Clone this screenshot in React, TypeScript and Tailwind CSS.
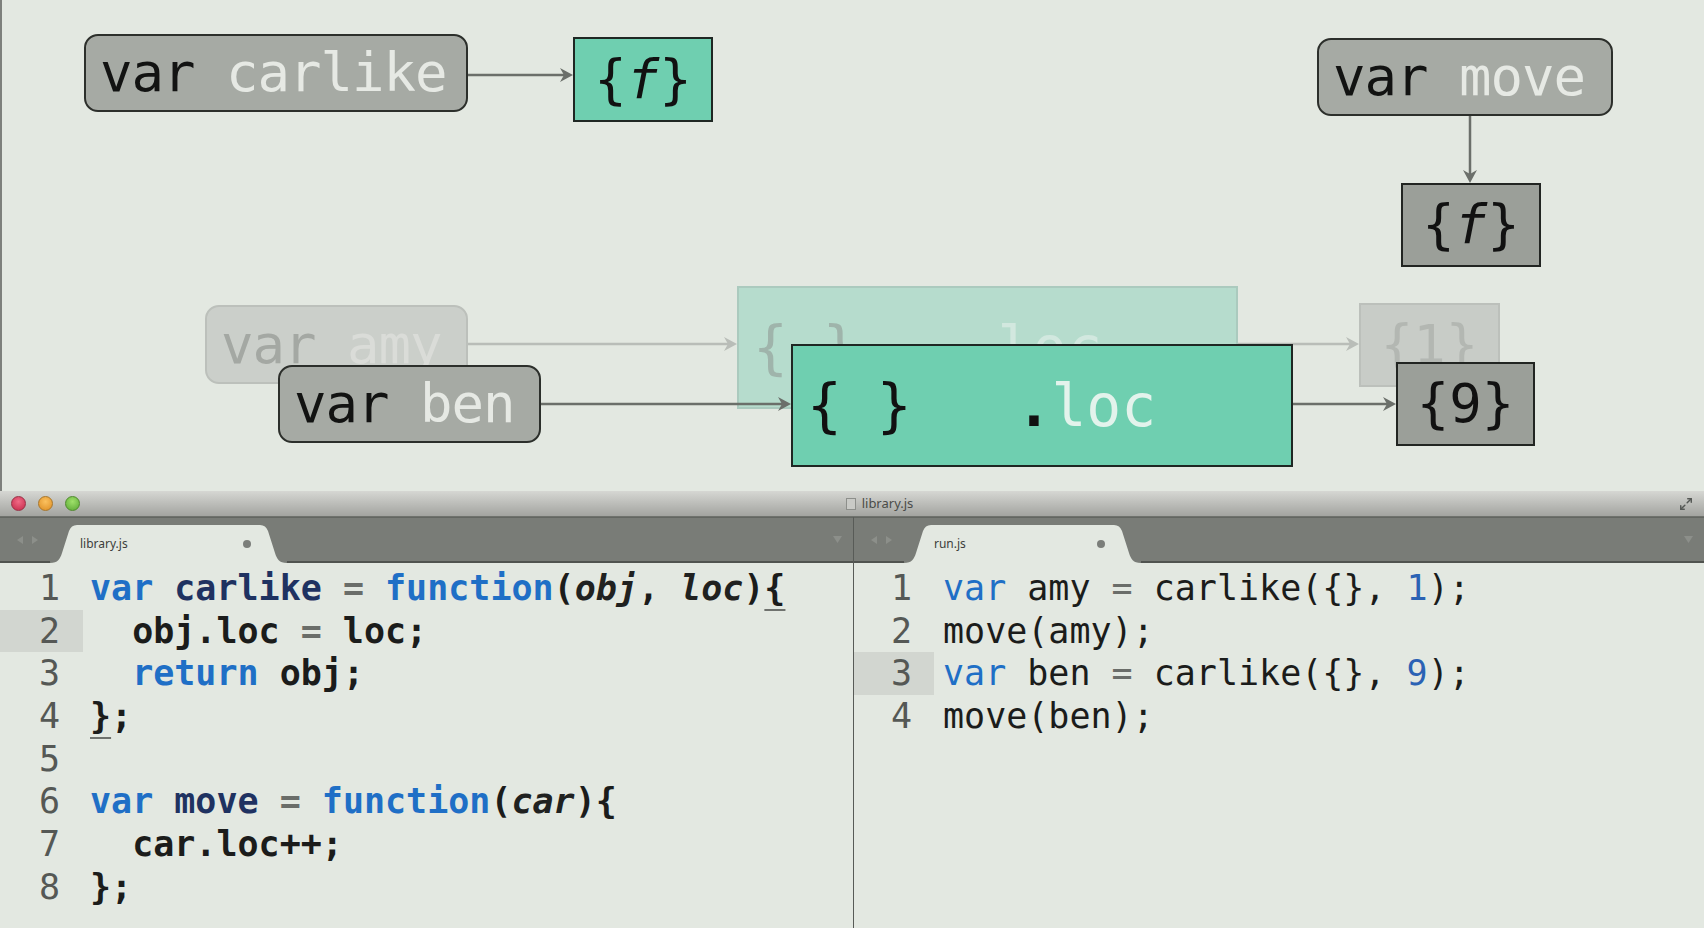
import { Maximize2 } from "lucide-react";

const MONO = "font-['DejaVu_Sans_Mono','Liberation_Mono',monospace]";

type Tok = { t: string; c?: string };

/* token colours */
const KW = "text-[#1f6fc6]";
const NAME = "text-[#1f3261]";
const OP = "text-[#6a6d69]";
const TXT = "text-[#1b1c1b]";
const NUM = "text-[#2b62b4]";
const PARAM = "text-[#202120] italic";
const MATCH = "underline decoration-[#6f726e] decoration-2 underline-offset-[9px]";

const LEFT_CODE: Tok[][] = [
  [
    { t: "var", c: KW },
    { t: " " },
    { t: "carlike", c: NAME },
    { t: " = ", c: OP },
    { t: "function", c: KW },
    { t: "(", c: TXT },
    { t: "obj", c: PARAM },
    { t: ", ", c: TXT },
    { t: "loc", c: PARAM },
    { t: ")", c: TXT },
    { t: "{", c: `${TXT} ${MATCH}` },
  ],
  [{ t: "  obj.loc ", c: TXT }, { t: "=", c: OP }, { t: " loc;", c: TXT }],
  [{ t: "  " }, { t: "return", c: KW }, { t: " obj;", c: TXT }],
  [{ t: "}", c: `${TXT} ${MATCH}` }, { t: ";", c: TXT }],
  [],
  [
    { t: "var", c: KW },
    { t: " " },
    { t: "move", c: NAME },
    { t: " = ", c: OP },
    { t: "function", c: KW },
    { t: "(", c: TXT },
    { t: "car", c: PARAM },
    { t: ")", c: TXT },
    { t: "{", c: TXT },
  ],
  [{ t: "  car.loc++;", c: TXT }],
  [{ t: "};", c: TXT }],
];

const RIGHT_CODE: Tok[][] = [
  [
    { t: "var", c: KW },
    { t: " amy ", c: TXT },
    { t: "=", c: OP },
    { t: " carlike({}, ", c: TXT },
    { t: "1", c: NUM },
    { t: ");", c: TXT },
  ],
  [{ t: "move(amy);", c: TXT }],
  [
    { t: "var", c: KW },
    { t: " ben ", c: TXT },
    { t: "=", c: OP },
    { t: " carlike({}, ", c: TXT },
    { t: "9", c: NUM },
    { t: ");", c: TXT },
  ],
  [{ t: "move(ben);", c: TXT }],
];

function Arrow({ x1, y1, x2, y2, faded }: { x1: number; y1: number; x2: number; y2: number; faded?: boolean }) {
  const col = faded ? "#b9bdb8" : "#6b6f6a";
  const vertical = x1 === x2;
  const head = vertical
    ? `${x2},${y2} ${x2 - 7},${y2 - 13} ${x2},${y2 - 9} ${x2 + 7},${y2 - 13}`
    : `${x2},${y2} ${x2 - 13},${y2 - 7} ${x2 - 9},${y2} ${x2 - 13},${y2 + 7}`;
  return (
    <g>
      <line x1={x1} y1={y1} x2={vertical ? x2 : x2 - 8} y2={vertical ? y2 - 8 : y2} stroke={col} strokeWidth={2.5} />
      <polygon points={head} fill={col} />
    </g>
  );
}

function VarBox({ name, className }: { name: string; className: string }) {
  return (
    <div
      className={`absolute flex items-center rounded-[14px] border-2 border-[#2c2f2b] bg-[#a6aaa4] pl-[14px] text-[54px] leading-none tracking-[-1px] whitespace-pre ${MONO} ${className}`}
    >
      <span className="text-[#121312]">var </span>
      <span className="text-[#e6e9e4]">{name}</span>
    </div>
  );
}

function CodePane({
  lines,
  hl,
  gutter,
  pr,
  gap,
  bold,
}: {
  lines: Tok[][];
  hl: number;
  gutter: string;
  pr: string;
  gap: string;
  bold?: boolean;
}) {
  return (
    <div className={`flex-1 pt-[4px] text-[35px] ${MONO} ${bold ? "font-bold" : "font-normal"}`}>
      {lines.map((line, i) => (
        <div key={i} className="flex h-[42.7px] leading-[42.7px] whitespace-pre">
          <div className={`${gutter} ${pr} shrink-0 text-right font-normal text-[#555855] ${i === hl ? "bg-[#d2d6d0]" : ""}`}>
            {i + 1}
          </div>
          <div className={gap}>
            {line.map((tok, j) => (
              <span key={j} className={tok.c}>
                {tok.t}
              </span>
            ))}
          </div>
        </div>
      ))}
    </div>
  );
}

function Tab({ label }: { label: string }) {
  return (
    <div className="relative h-[38px] w-[237px] shrink-0">
      <svg className="absolute inset-0" width="237" height="38" viewBox="0 0 237 38">
        <path
          d="M0 38 C8 38 10 34 12 28 L19 6 C20.5 2 23 0 27 0 L210 0 C214 0 216.5 2 218 6 L225 28 C227 34 229 38 237 38 Z"
          fill="#e3e8e1"
        />
      </svg>
      <div className="relative flex h-full items-center pl-[30px] pr-[36px] font-['Noto_Sans','Liberation_Sans',sans-serif] text-[12px] text-[#3c3e3b]">
        <span className="flex-1">{label}</span>
        <span className="size-[8px] rounded-full bg-[#7b7e7a]" />
      </div>
    </div>
  );
}

function TabBar({ label }: { label: string }) {
  return (
    <div className="flex h-[46px] items-end border-t border-[#636661] bg-[#797c77]">
      <div className="flex h-full w-[50px] shrink-0 items-center justify-center gap-[9px] border-b-2 border-[#50534f] pl-[4px]">
        <svg width="6" height="8" viewBox="0 0 6 8">
          <polygon points="6,0 0,4 6,8" fill="#8c8f8a" />
        </svg>
        <svg width="6" height="8" viewBox="0 0 6 8">
          <polygon points="0,0 6,4 0,8" fill="#8c8f8a" />
        </svg>
      </div>
      <Tab label={label} />
      <div className="flex h-full flex-1 items-center justify-end border-b-2 border-[#50534f] pr-[11px]">
        <svg width="9" height="7" viewBox="0 0 9 7">
          <polygon points="0,0 9,0 4.5,7" fill="#8c8f8a" />
        </svg>
      </div>
    </div>
  );
}

export default function App() {
  return (
    <div className="flex h-[928px] w-[1704px] flex-col overflow-hidden bg-[#e3e8e1]">
      {/* diagram */}
      <div className="relative h-[491px] shrink-0 shadow-[inset_2px_0_0_#7d807c]">
        {/* faded previous state */}
        <div className={`absolute left-[205px] top-[305px] flex h-[79px] w-[263px] items-center rounded-[14px] border-2 border-[#bcc0bb] bg-[#cbcfca] pl-[14px] text-[54px] leading-none tracking-[-1px] whitespace-pre ${MONO}`}>
          <span className="text-[#a4a8a3]">var </span>
          <span className="text-[#dadcd8]">amy</span>
        </div>
        <div className={`absolute left-[737px] top-[286px] flex h-[123px] w-[501px] items-center border-2 border-[#abcabe] bg-[#b6dccd] pl-[14px] text-[58px] leading-none whitespace-pre ${MONO}`}>
          <span className="text-[#9fb4ab]">{"{ }   ."}</span>
          <span className="text-[#d2e8df]">loc</span>
        </div>
        <div className={`absolute left-[1359px] top-[303px] flex h-[84px] w-[141px] items-center justify-center border-2 border-[#bcc0bb] bg-[#c8ccc7] text-[54px] leading-none ${MONO} text-[#b3b7b2]`}>
          {"{1}"}
        </div>

        <svg className="absolute inset-0" width="1704" height="491">
          <Arrow x1={468} y1={75} x2={573} y2={75} />
          <Arrow x1={1470} y1={116} x2={1470} y2={183} />
          <Arrow x1={468} y1={344} x2={737} y2={344} faded />
          <Arrow x1={1238} y1={344} x2={1359} y2={344} faded />
          <Arrow x1={541} y1={404} x2={791} y2={404} />
          <Arrow x1={1293} y1={404} x2={1396} y2={404} />
        </svg>

        <VarBox name="carlike" className="left-[84px] top-[34px] h-[78px] w-[384px]" />
        <div className={`absolute left-[573px] top-[37px] flex h-[85px] w-[140px] items-center justify-center border-2 border-[#1f2723] bg-[#6fcfb0] text-[54px] leading-none text-[#111] ${MONO}`}>
          {"{"}
          <span className="italic">f</span>
          {"}"}
        </div>

        <VarBox name="move" className="left-[1317px] top-[38px] h-[78px] w-[296px]" />
        <div className={`absolute left-[1401px] top-[183px] flex h-[84px] w-[140px] items-center justify-center border-2 border-[#222522] bg-[#9b9f99] text-[54px] leading-none text-[#111] ${MONO}`}>
          {"{"}
          <span className="italic">f</span>
          {"}"}
        </div>

        <VarBox name="ben" className="left-[278px] top-[365px] h-[78px] w-[263px]" />
        <div className={`absolute left-[791px] top-[344px] flex h-[123px] w-[502px] items-center border-2 border-[#1f2723] bg-[#6fcfb0] pl-[14px] text-[58px] leading-none whitespace-pre ${MONO}`}>
          <span className="text-[#111]">{"{ }   "}</span>
          <span className="font-bold text-[#111]">.</span>
          <span className="text-[#e3f3ec]">loc</span>
        </div>
        <div className={`absolute left-[1396px] top-[362px] flex h-[84px] w-[139px] items-center justify-center border-2 border-[#222522] bg-[#9b9f99] text-[54px] leading-none text-[#111] ${MONO}`}>
          {"{9}"}
        </div>
      </div>

      {/* editor window */}
      <div className="flex flex-1 flex-col">
        <div className="relative flex h-[26px] shrink-0 items-center border-b border-[#6f726d] bg-gradient-to-b from-[#d6d7d3] to-[#a3a4a0] px-[11px]">
          <div className="flex gap-[12px]">
            <span className="size-[15px] rounded-full border border-[#9a3046] bg-[radial-gradient(circle_at_50%_35%,#f06a86,#c42848)]" />
            <span className="size-[15px] rounded-full border border-[#a8762a] bg-[radial-gradient(circle_at_50%_35%,#fbc15f,#dd8d22)]" />
            <span className="size-[15px] rounded-full border border-[#4f8a2c] bg-[radial-gradient(circle_at_50%_35%,#9fe06a,#5aa834)]" />
          </div>
          <div className="flex flex-1 items-center justify-center gap-[6px] font-['Noto_Sans','Liberation_Sans',sans-serif] text-[13px] text-[#4a4c49]">
            <span className="h-[12px] w-[10px] border border-[#8d8f8b] bg-[#c9cac6]" />
            <span>library.js</span>
          </div>
          <Maximize2 size={14} strokeWidth={2.5} className="text-[#555855]" />
        </div>

        <div className="flex flex-1">
          <div className="flex w-[854px] shrink-0 flex-col border-r border-[#585b57]">
            <TabBar label="library.js" />
            <CodePane lines={LEFT_CODE} hl={1} gutter="w-[83px]" pr="pr-[23px]" gap="pl-[7px]" bold />
          </div>
          <div className="flex flex-1 flex-col">
            <TabBar label="run.js" />
            <CodePane lines={RIGHT_CODE} hl={2} gutter="w-[80px]" pr="pr-[22px]" gap="pl-[9px]" />
          </div>
        </div>
      </div>
    </div>
  );
}
